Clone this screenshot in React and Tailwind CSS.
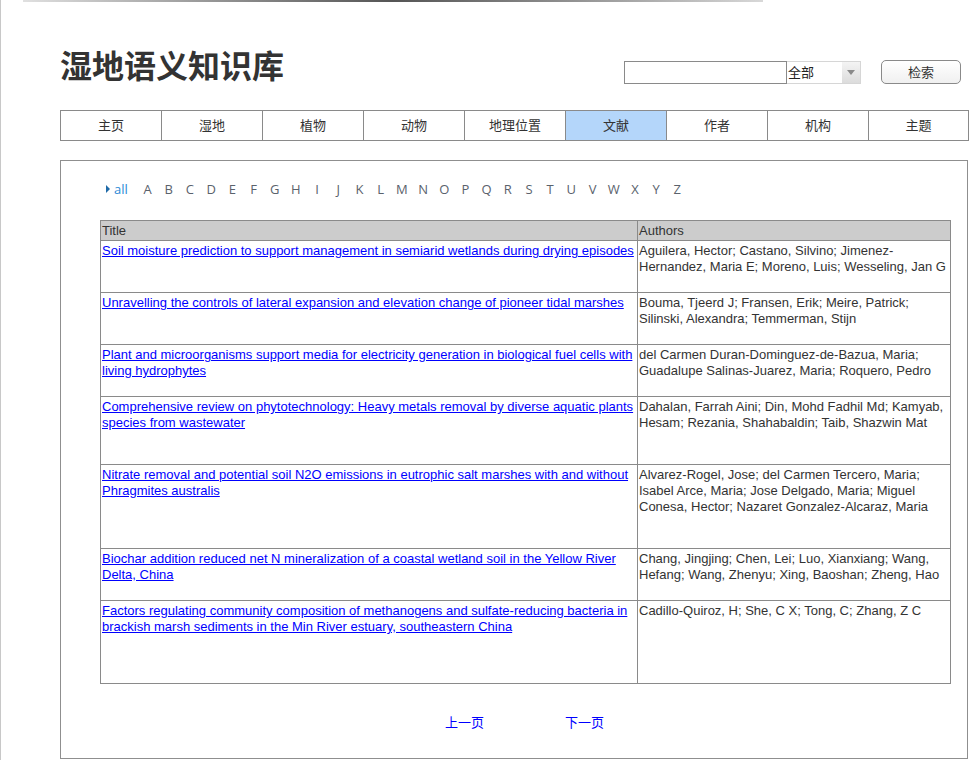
import React from "react";

const NAV = ["主页", "湿地", "植物", "动物", "地理位置", "文献", "作者", "机构", "主题"];
const LETTERS = "ABCDEFGHIJKLMNOPQRSTUVWXYZ".split("");

const ROWS = [
  {
    h: "h-[52px]",
    title: "Soil moisture prediction to support management in semiarid wetlands during drying episodes",
    authors: "Aguilera, Hector; Castano, Silvino; Jimenez-Hernandez, Maria E; Moreno, Luis; Wesseling, Jan G",
  },
  {
    h: "h-[52px]",
    title: "Unravelling the controls of lateral expansion and elevation change of pioneer tidal marshes",
    authors: "Bouma, Tjeerd J; Fransen, Erik; Meire, Patrick; Silinski, Alexandra; Temmerman, Stijn",
  },
  {
    h: "h-[52px]",
    title: "Plant and microorganisms support media for electricity generation in biological fuel cells with living hydrophytes",
    authors: "del Carmen Duran-Dominguez-de-Bazua, Maria; Guadalupe Salinas-Juarez, Maria; Roquero, Pedro",
  },
  {
    h: "h-[68px]",
    title: "Comprehensive review on phytotechnology: Heavy metals removal by diverse aquatic plants species from wastewater",
    authors: "Dahalan, Farrah Aini; Din, Mohd Fadhil Md; Kamyab, Hesam; Rezania, Shahabaldin; Taib, Shazwin Mat",
  },
  {
    h: "h-[84px]",
    title: "Nitrate removal and potential soil N2O emissions in eutrophic salt marshes with and without Phragmites australis",
    authors: "Alvarez-Rogel, Jose; del Carmen Tercero, Maria; Isabel Arce, Maria; Jose Delgado, Maria; Miguel Conesa, Hector; Nazaret Gonzalez-Alcaraz, Maria",
  },
  {
    h: "h-[52px]",
    title: "Biochar addition reduced net N mineralization of a coastal wetland soil in the Yellow River Delta, China",
    authors: "Chang, Jingjing; Chen, Lei; Luo, Xianxiang; Wang, Hefang; Wang, Zhenyu; Xing, Baoshan; Zheng, Hao",
  },
  {
    h: "h-[82px]",
    title: "Factors regulating community composition of methanogens and sulfate-reducing bacteria in brackish marsh sediments in the Min River estuary, southeastern China",
    authors: "Cadillo-Quiroz, H; She, C X; Tong, C; Zhang, Z C",
    last: true,
  },
];

export default function App() {
  return (
    <div className="w-[970px] h-[760px] bg-white overflow-hidden border-l border-l-[#c8c8c8] font-['Liberation_Sans','Noto_Sans_CJK_SC',sans-serif] text-[#333]">
      {/* top sketch line */}
      <div className="ml-[22px] w-[740px] h-[2px] bg-gradient-to-r from-[#e0e0e0] via-[#555] to-[#d8d8d8]" />

      {/* header */}
      <div className="flex items-start justify-between pl-[59px] pr-[9px] pt-[46px]">
        <div className="h-[32px] leading-[32px] text-[32px] font-bold text-[#333] font-['Noto_Sans_CJK_SC',sans-serif]">
          湿地语义知识库
        </div>
        <div className="flex items-start mt-[12px]">
          <div className="mt-[1px] flex h-[23px]">
            <div className="w-[163px] h-[23px] border border-[#8a8a8a] bg-white" />
            <div className="w-[74px] h-[23px] flex border-y border-r border-y-[#d6d6d6] border-r-[#d6d6d6] bg-white">
              <div className="flex-1 text-[13px] leading-[20px] pl-[1px] text-[#222] font-['Noto_Sans_CJK_SC',sans-serif]">全部</div>
              <div className="w-[18px] h-full bg-gradient-to-b from-[#f4f4f4] to-[#dcdcdc] flex items-center justify-center">
                <svg width="8" height="5" viewBox="0 0 8 5">
                  <path d="M0 0 L8 0 L4 5 Z" fill="#8a8a8a" />
                </svg>
              </div>
            </div>
          </div>
          <div className="ml-[20px] w-[80px] h-[24px] rounded-[5px] border border-[#8a8a8a] bg-gradient-to-b from-white to-[#f0f0f0] flex items-center justify-center text-[13px] text-[#333] font-['Noto_Sans_CJK_SC',sans-serif]">
            检索
          </div>
        </div>
      </div>

      {/* nav */}
      <div className="ml-[59px] mt-[26px] w-[909px] h-[31px] flex border border-[#8a8a8a] font-['Noto_Sans_CJK_SC',sans-serif] text-[13px] text-[#333]">
        {NAV.map((n, i) => (
          <div
            key={n}
            className={
              (i === NAV.length - 1 ? "w-[99px] " : "w-[101px] border-r border-r-[#8a8a8a] ") +
              (n === "文献" ? "bg-[#b4d6fa] " : "bg-white ") +
              "h-full flex items-center justify-center pb-[2px]"
            }
          >
            {n}
          </div>
        ))}
      </div>

      {/* panel */}
      <div className="ml-[59px] mt-[19px] w-[908px] h-[599px] border border-[#8f8f8f] flex flex-col">
        {/* alphabet */}
        <div className="pl-[45px] pt-[19px] h-[37px] flex items-center font-['Open_Sans',sans-serif] text-[13px] leading-[18px]">
          <svg width="4" height="8" viewBox="0 0 4 8" className="mr-[4px]">
            <path d="M0 0 L4 4 L0 8 Z" fill="#1f6aa8" />
          </svg>
          <span className="text-[#2a8ad6] w-[16px]">all</span>
          <div className="flex ml-[7px]">
            {LETTERS.map((l) => (
              <span key={l} className="w-[21.2px] text-center text-[#5a626c]">
                {l}
              </span>
            ))}
          </div>
        </div>

        {/* table */}
        <div className="ml-[39px] mt-[22px] w-[851px] border border-[#8a8a8a] text-[13px] leading-[16px] flex flex-col">
          <div className="h-[20px] flex bg-[#cccccc] border-b border-b-[#8a8a8a] text-[#333]">
            <div className="w-[537px] border-r border-r-[#8a8a8a] pl-[1px] pt-[2px]">Title</div>
            <div className="flex-1 pl-[1px] pt-[2px]">Authors</div>
          </div>
          {ROWS.map((r, i) => (
            <div key={i} className={r.h + " flex " + (r.last ? "" : "border-b border-b-[#8a8a8a]")}>
              <div className="w-[537px] border-r border-r-[#8a8a8a] pl-[1px] pt-[2px]">
                <a href="#" className="text-[#0000ff] underline">
                  {r.title}
                </a>
              </div>
              <div className="flex-1 pl-[1px] pt-[2px] text-[#333]">{r.authors}</div>
            </div>
          ))}
        </div>

        {/* pager */}
        <div className="mt-[29px] flex pl-[384px] text-[13px] leading-[18px] text-[#0000ff] font-['Noto_Sans_CJK_SC',sans-serif]">
          <span>上一页</span>
          <span className="ml-[81px]">下一页</span>
        </div>
      </div>
    </div>
  );
}
